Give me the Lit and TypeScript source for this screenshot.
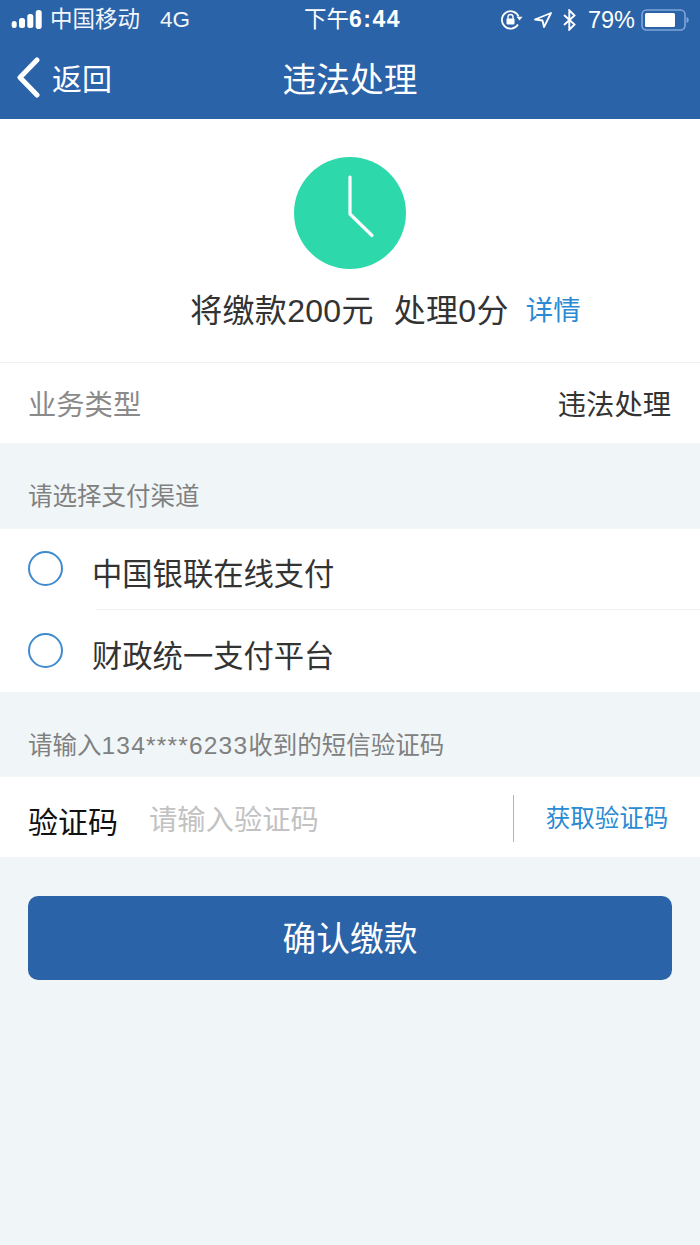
import { LitElement, html, css } from "lit";
import { customElement } from "lit/decorators.js";

@customElement("app-root")
export class AppRoot extends LitElement {
  static styles = css`
    :host {
      display: block;
      width: 700px;
      height: 1245px;
      background: #f0f6f7;
      font-family: "Liberation Sans", "Noto Sans CJK SC", sans-serif;
      color: #333;
      overflow: hidden;
    }
    .header { background: #2b63a8; color: #fff; height: 119px; display: flex; flex-direction: column; }
    .status { height: 38px; display: grid; grid-template-columns: 1fr auto 1fr; align-items: center; padding: 0 11px; line-height: 38px; }
    .st-left, .st-right { display: flex; align-items: center; height: 38px; }
    .st-right { justify-content: flex-end; }
    .carrier { font-size: 22.5px; margin-left: 7px; color: #f2f6fb; }
    .net { font-size: 22.5px; margin-left: 20px; color: #f2f6fb; }
    .time { font-size: 22.5px; padding-left: 5px; }
    .time b { font-size: 23px; font-weight: 700; letter-spacing: 1.500px; }
    .pct { font-size: 23.5px; margin: 0 6px 0 12px; }
    .ic { display: block; }
    .lock { margin-right: 11px; }
    .loc { margin-right: 11px; }
    .nav { flex: 1; display: grid; grid-template-columns: 1fr auto 1fr; align-items: center; padding: 0 16px 4px; }
    .back { display: flex; align-items: center; gap: 11px; font-size: 30px; }
    .title { font-size: 33.700px; line-height: 44px; margin-top: 6px; }

    .hero { background: #fff; height: 244px; box-sizing: border-box; border-bottom: 1px solid #f0f1f2; display: flex; flex-direction: column; align-items: center; padding-top: 38px; }
    .clock { display: block; }
    .summary { display: flex; align-items: center; margin-top: 15px; height: 48px; margin-left: 71px; }
    .summary .amt, .summary .pts { font-size: 32px; letter-spacing: 0.300px; color: #333; }
    .summary .pts { margin-left: 20px; }
    .summary .link { font-size: 27.5px; color: #2a8ad4; margin-left: 17px; }

    .row { background: #fff; height: 80px; display: flex; align-items: center; justify-content: space-between; padding: 0 29px 2px 28px; box-sizing: border-box; font-size: 28.300px; }
    .row .k { color: #8a8a8a; }
    .row .v { color: #333; }

    .label { height: 86px; box-sizing: border-box; padding: 36px 28px 0; font-size: 24.5px; line-height: 36px; color: #808080; }
    .label.sm { height: 85px; padding-top: 36px; }
    .label .num { letter-spacing: 1.200px; }

    .opts { background: #fff; }
    .opt { height: 80px; display: flex; align-items: flex-start; padding-left: 28px; box-sizing: border-box; }
    .opt.second { height: 82px; padding-top: 1px; }
    .radio { width: 35px; height: 35px; box-sizing: border-box; border: 2px solid #3f8bd0; border-radius: 50%; margin-top: 22px; flex: none; }
    .opt .t { margin-left: 29px; font-size: 30.300px; line-height: 44px; margin-top: 24px; color: #333; }
    .sep { height: 1px; background: #f2f3f4; margin-left: 96px; }

    .code { background: #fff; height: 80px; display: flex; align-items: center; padding-left: 28px; }
    .code .name { font-size: 30px; color: #111; width: 121px; margin-top: 5px; }
    .code .ph { flex: 1; font-size: 28.300px; color: #c2c2c2; }
    .code .div { width: 1px; height: 47px; background: #b4b4b4; margin-top: 2px; }
    .code .get { width: 186px; text-align: center; font-size: 24.500px; color: #2a8ad4; margin-top: -1px; }

    .btn { margin: 39px 28px 0; height: 84px; background: #2b63a8; border-radius: 10px; color: #fff; font-size: 33.700px; display: flex; align-items: center; justify-content: center; padding-bottom: 4px; box-sizing: border-box; }
  `;

  render() {
    return html`
      <div class="header">
        <div class="status">
          <div class="st-left">
            <svg class="ic" width="32" height="20" viewBox="0 0 32 20" fill="#fff">
              <rect x="0.700" y="11" width="5" height="7" rx="2.500"/>
              <rect x="8" y="8" width="6" height="10" rx="2.500"/>
              <rect x="16.300" y="4" width="6" height="14" rx="2.500"/>
              <rect x="24.700" y="0" width="6" height="19" rx="2.800"/>
            </svg>
            <span class="carrier">中国移动</span>
            <span class="net">4G</span>
          </div>
          <div class="time">下午<b>6:44</b></div>
          <div class="st-right">
            <svg class="ic lock" width="22" height="20" viewBox="0 0 22 20" fill="none" stroke="#fff" stroke-width="1.800">
              <path d="M17 14.500A8.700 8.700 0 1 1 17.600 6.500"/>
              <path d="M15.500 6.800h6l-3 3.700z" fill="#fff" stroke="none"/>
              <rect x="5.500" y="8.500" width="8" height="6" rx="1" fill="#fff" stroke="none"/>
              <path d="M7 9V7a2.500 2.500 0 0 1 5 0V9" stroke-width="1.400"/>
            </svg>
            <svg class="ic loc" width="18" height="16" viewBox="0 0 18 16" fill="none" stroke="#fff" stroke-width="1.800" stroke-linejoin="round">
              <path d="M17 1 1 7.500l7.500 1 1.500 6.500z"/>
            </svg>
            <svg class="ic" width="13" height="22" viewBox="0 0 13 22" fill="none" stroke="#fff" stroke-width="1.900">
              <path d="M1 6l10.500 9.500L6.300 20.700V1.300L11.500 6.500 1 16"/>
            </svg>
            <span class="pct">79%</span>
            <svg class="ic" width="48" height="22" viewBox="0 0 48 22">
              <rect x="1" y="1" width="43" height="20" rx="4.500" fill="none" stroke="#7ea6d8" stroke-width="1.600"/>
              <rect x="4" y="4" width="30" height="14" rx="1.500" fill="#fff"/>
              <path d="M45.500 8c1.500.3 2.200 1.500 2.200 3s-.7 2.700-2.200 3z" fill="#7ea6d8"/>
            </svg>
          </div>
        </div>
        <div class="nav">
          <div class="back">
            <svg class="ic" width="25" height="42" viewBox="0 0 25 42" fill="none" stroke="#fff" stroke-width="5" stroke-linecap="round" stroke-linejoin="round">
              <path d="M21 4 4 21.500 21 39"/>
            </svg>
            <span>返回</span>
          </div>
          <div class="title">违法处理</div>
          <div></div>
        </div>
      </div>

      <div class="hero">
        <svg class="clock" width="112" height="112" viewBox="0 0 112 112">
          <circle cx="56" cy="56" r="56" fill="#2dd8ab"/>
          <path d="M56 20v37L78 78.500" fill="none" stroke="#fff" stroke-width="3.200" stroke-linecap="round" stroke-linejoin="round"/>
        </svg>
        <div class="summary">
          <span class="amt">将缴款200元</span>
          <span class="pts">处理0分</span>
          <span class="link">详情</span>
        </div>
      </div>

      <div class="row"><span class="k">业务类型</span><span class="v">违法处理</span></div>

      <div class="label">请选择支付渠道</div>
      <div class="opts">
        <div class="opt"><span class="radio"></span><span class="t">中国银联在线支付</span></div>
        <div class="sep"></div>
        <div class="opt second"><span class="radio"></span><span class="t">财政统一支付平台</span></div>
      </div>

      <div class="label sm">请输入<span class="num">134****6233</span>收到的短信验证码</div>
      <div class="code">
        <span class="name">验证码</span>
        <span class="ph">请输入验证码</span>
        <span class="div"></span>
        <span class="get">获取验证码</span>
      </div>

      <div class="btn">确认缴款</div>
    `;
  }
}
